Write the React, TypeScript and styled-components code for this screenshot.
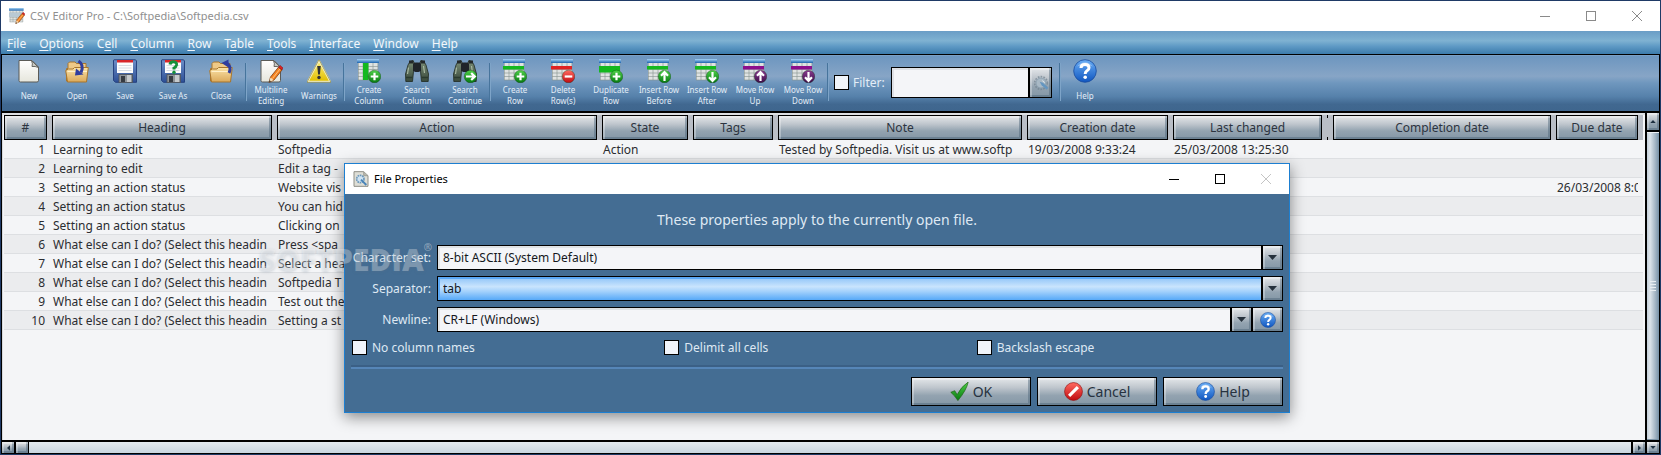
import React from "react";
import styled, { createGlobalStyle, css } from "styled-components";

const GlobalStyle = createGlobalStyle`
  * { box-sizing: border-box; }
  body { margin: 0; background: #f4f5f7; }
  body, button, input, select, table {
    font-family: "Noto Sans", "Open Sans", sans-serif;
    font-size: 12px;
    line-height: 18px;
  }
  button, input, select { margin: 0; padding: 0; border: 0; border-radius: 0; background: none; color: inherit; }
`;

const steel = css`
  background: linear-gradient(#e4e7ea 0%, #bfc6cd 35%, #93a3b0 65%, #8497a6 100%);
  box-shadow: inset 1px 1px 0 1px rgba(255, 255, 255, 0.3), inset -1px -1px 0 1px rgba(75, 100, 120, 0.45);
`;

/* ---------- window frame ---------- */
const Frame = styled.div`
  position: relative;
  min-height: 100vh;
  display: flex;
  flex-direction: column;
  border: 1px solid #1f3a66;
  background: #fff;
`;
const TitleBar = styled.header`
  display: flex;
  align-items: center;
  height: 30px;
  padding-left: 8px;
  background: #fff;
`;
const Title = styled.h1<{ $muted?: boolean }>`
  flex: 1;
  margin: 0;
  padding-left: 5px;
  font-size: 11px;
  font-weight: 400;
  color: ${(p) => (p.$muted ? "#8f8f8f" : "#000")};
`;
const Caption = styled.button<{ $color: string }>`
  display: grid;
  place-items: center;
  width: 46px;
  height: 30px;
  color: ${(p) => p.$color};
`;
const MenuBar = styled.nav`
  display: flex;
  align-items: center;
  height: 23px;
  padding-top: 2px;
  padding-left: 6px;
  gap: 13px;
  background: linear-gradient(#6a9dc6, #7fb2d2 42%, #5f9ac5 66%, #3c7bab);
`;
const MenuItem = styled.button`
  color: #f2f7fb;
  white-space: nowrap;
  u { text-underline-offset: 2px; }
`;

/* ---------- toolbar ---------- */
const ToolBar = styled.div`
  display: flex;
  align-items: stretch;
  height: 59px;
  padding-left: 3px;
  border: solid #000;
  border-width: 1px 1px 2px 1px;
  background: linear-gradient(#6b95bf, #87a5c6 38%, #6f97be 50%, #5681ab 74%, #416890 88%, #3f668e);
  box-shadow: inset 0 1px 0 #7aa0c6;
`;
const ToolButton = styled.button`
  display: flex;
  flex-direction: column;
  align-items: center;
  flex: none;
  width: 48px;
  padding-top: 4px;
  color: #e3edf7;
`;
const ToolLabel = styled.span`
  flex: 1;
  display: flex;
  align-items: center;
  justify-content: center;
  max-height: 24px;
  font-size: 8px;
  line-height: 11px;
  text-align: center;
  white-space: pre;
`;
const Divider = styled.div`
  flex: none;
  width: 2px;
  height: 38px;
  margin-top: 8px;
  border-left: 1px solid #47749c;
  border-right: 1px solid #7ea4c8;
`;
const Filter = styled.div`
  display: flex;
  align-items: center;
  width: 230px;
  height: 31px;
  margin-top: 12px;
  padding-left: 5px;
`;
const Check = styled.input.attrs({ type: "checkbox" })`
  appearance: none;
  flex: none;
  width: 15px;
  height: 15px;
  border: 1px solid #000;
  background: #f0f4fa;
  &:checked { background: #3c7bab; }
`;
const FilterLabel = styled.label`
  width: 42px;
  padding-left: 4px;
  font-size: 12px;
  color: #e3edf7;
`;
const FilterInput = styled.input`
  width: 138px;
  height: 31px;
  padding: 0 5px;
  border: 1px solid #000;
  background: #f4f5f8;
  box-shadow: inset 2px 2px 0 #dfe1e6;
`;
const FilterButton = styled.button`
  ${steel}
  display: grid;
  place-items: center;
  width: 23px;
  height: 31px;
  border: 1px solid #000;
`;

/* ---------- data grid ---------- */
const Body = styled.main`
  flex: 1;
  display: grid;
  grid-template-columns: minmax(0, 1fr) 14px;
  grid-template-rows: minmax(0, 1fr) 14px;
  border: solid #000;
  border-width: 0 1px 0 1px;
  background: #f4f5f7;
`;
const GridPane = styled.section`
  padding: 2px 2px 0 1px;
  border-left: 1px solid #d8dbe0;
  overflow: hidden;
  background: linear-gradient(#dcdfe3 0 2px, #f4f5f7 2px);
`;
const Table = styled.table`
  width: 100%;
  table-layout: fixed;
  border-collapse: collapse;
  color: #2b2d31;
  th, td { padding: 0; font-weight: 400; }
`;
const Heads = styled.tr`
  background: #b9bec6;
`;
const HeadCell = styled.div`
  ${steel}
  display: flex;
  align-items: center;
  justify-content: center;
  height: 25px;
  margin-right: 5px;
  border: 1px solid #000;
  color: #2c3440;
`;
const TickCell = styled.div`
  width: 1px;
  height: 25px;
  background: linear-gradient(#000 3px, transparent 3px 22px, #000 22px);
`;
const Row = styled.tr`
  height: 19px;
  background: #f4f5f7;
  box-shadow: inset 0 -1px 0 #dddfe2;
  &:nth-child(even) { background: #ebecee; }
`;
const CellText = styled.div<{ $end?: boolean }>`
  height: 19px;
  line-height: 19px;
  margin-right: 5px;
  padding-left: 1px;
  padding-right: ${(p) => (p.$end ? 2 : 0)}px;
  overflow: hidden;
  white-space: nowrap;
  text-align: ${(p) => (p.$end ? "right" : "left")};
`;

/* ---------- scroll bars ---------- */
const VBar = styled.div`
  display: flex;
  flex-direction: column;
  border-left: 2px solid #000;
`;
const HBar = styled.div`
  display: flex;
  border: solid #000;
  border-width: 2px 0 1px 0;
  background: linear-gradient(#e3eaf0, #c9d5df);
`;
const Corner = styled.div`
  display: flex;
  border: solid #000;
  border-width: 2px 0 1px 2px;
`;
const ScrollButton = styled.button<{ $edge?: "bottom" | "left" | "right"; $h?: number; $w?: number }>`
  ${steel}
  display: grid;
  place-items: center;
  flex: none;
  width: ${(p) => p.$w ?? 12}px;
  height: ${(p) => p.$h ?? 11}px;
  color: #1d2f40;
  ${(p) => p.$edge && `border-${p.$edge}: 2px solid #000;`}
`;
const VThumb = styled.div`
  flex: 1;
  display: grid;
  place-items: center;
  background: linear-gradient(90deg, #c4d0da, #dde4ea 25%, #a9b9c7 65%, #7791a6);
  box-shadow: inset 0 1px 0 #eef1f4, inset 0 -1px 0 #7b93a6;
`;
const HThumb = styled.div`
  ${steel}
  width: 13px;
  height: 11px;
  border-right: 1px solid #000;
`;
const Spacer = styled.div`
  flex: 1;
`;

/* ---------- dialog ---------- */
const Dialog = styled.section`
  position: absolute;
  top: 162px;
  left: 343px;
  right: 370px;
  border: 1px solid #1d7fd1;
  background: #446d93;
  color: #dfe9f3;
  box-shadow: 0 4px 14px rgba(0, 0, 0, 0.45);
`;
const DialogBody = styled.form`
  display: flex;
  flex-direction: column;
  padding: 16px 6px 6px;
`;
const Notice = styled.p`
  margin: 0 0 15px;
  font-size: 14px;
  line-height: 20px;
  text-align: center;
`;
const Fields = styled.div`
  display: grid;
  grid-template-columns: 80px minmax(0, 1fr);
  column-gap: 6px;
  row-gap: 6px;
  align-items: center;
  margin-bottom: 8px;
`;
const FieldLabel = styled.label`
  text-align: right;
  white-space: nowrap;
`;
const Control = styled.div`
  display: flex;
`;
const Combo = styled.div`
  flex: 1;
  display: grid;
  grid-template-columns: minmax(0, 1fr) 22px;
`;
const Select = styled.select<{ $active?: boolean }>`
  appearance: none;
  grid-row: 1;
  grid-column: 1 / 3;
  height: 25px;
  padding: 0 28px 0 5px;
  border: 1px solid #000;
  color: #15181c;
  background: ${(p) => (p.$active ? "linear-gradient(#8cc2f8, #c9e4fd 42%, #a5d2fc 62%, #57a9f8)" : "#f4f5f8")};
  box-shadow: ${(p) => (p.$active ? "inset 1px 1px 0 1px #5ba8f5" : "inset 2px 2px 0 #dfe2e4")};
`;
const Arrow = styled.span`
  ${steel}
  grid-row: 1;
  grid-column: 2;
  display: grid;
  place-items: center;
  border: solid #000;
  border-width: 1px 1px 1px 2px;
  pointer-events: none;
  color: #26313c;
`;
const HintButton = styled.button`
  ${steel}
  display: grid;
  place-items: center;
  width: 31px;
  height: 25px;
  border: 1px solid #000;
`;
const Options = styled.div`
  display: grid;
  grid-template-columns: repeat(3, minmax(0, 1fr));
  column-gap: 6px;
  padding-left: 1px;
`;
const Option = styled.label`
  display: flex;
  align-items: center;
  gap: 5px;
  height: 15px;
`;
const Rule = styled.hr`
  width: 100%;
  height: 4px;
  margin: 10px 0 8px;
  border: 0;
  background: linear-gradient(#3b6086 50%, #5686b8 50%);
`;
const Actions = styled.div`
  display: flex;
  justify-content: flex-end;
  gap: 6px;
`;
const ActionButton = styled.button`
  ${steel}
  display: flex;
  align-items: center;
  justify-content: center;
  gap: 4px;
  width: 120px;
  height: 29px;
  border: 1px solid #000;
  font-size: 14px;
  color: #26323f;
`;

const Watermark = styled.div`
  position: absolute;
  top: 238px;
  left: 258px;
  display: flex;
  font-family: "Open Sans", sans-serif;
  font-size: 30px;
  line-height: 42px;
  font-weight: 800;
  color: rgba(255, 255, 255, 0.28);
  text-shadow: 0 1px 3px rgba(90, 110, 130, 0.25);
  pointer-events: none;
  sup { font-size: 10px; line-height: 16px; font-weight: 600; vertical-align: top; color: rgba(255, 255, 255, 0.4); }
`;

/* ---------- drawings ---------- */
const Hidden = styled.svg`
  position: absolute;
  width: 0;
  height: 0;
`;
const grad = (id: string, a: string, b: string) => (
  <linearGradient id={id} x1="0" y1="0" x2="0" y2="1">
    <stop offset="0" stopColor={a} />
    <stop offset="1" stopColor={b} />
  </linearGradient>
);
const Gradients = () => (
  <Hidden aria-hidden="true">
    <defs>
      {grad("paper", "#ffffff", "#e6e6dc")}
      {grad("folder", "#fbe3a8", "#dba95a")}
      {grad("disk", "#6d8fc8", "#2d4f96")}
      {grad("yellow", "#fff27a", "#e0bd00")}
      {grad("head", "#a6d4f5", "#1d63ae")}
      {grad("green", "#4fd04a", "#067a10")}
      {grad("red", "#ff6a60", "#c00a10")}
      {grad("purple", "#8a3c90", "#3d0c48")}
      {grad("blue", "#6aaef5", "#0f55c0")}
      {grad("bino", "#7c8f78", "#38483a")}
    </defs>
  </Hidden>
);

const Icon = ({ size = 24, children }: { size?: number; children: React.ReactNode }) => (
  <svg width={size} height={size} viewBox="0 0 24 24" fill="none" aria-hidden="true">
    {children}
  </svg>
);
const Page = () => (
  <>
    <path d="M2 1.500H15L21.500 8V21.500Q21.500 23 20 23H3.500Q2 23 2 21.500Z" fill="url(#paper)" stroke="#5b5b57" />
    <path d="M14.500 1.500Q16 5 15 7.500Q18 7 21.500 8.500Z" fill="#c9c9c2" stroke="#5b5b57" strokeWidth=".9" />
  </>
);
const Pencil = () => (
  <>
    <path d="M10 23.500L11.500 18L19.500 8.200L23 11L15 21Z" fill="#f58220" stroke="#7a3a10" strokeWidth=".8" />
    <path d="M13.500 19.500L21 10" stroke="#ffc27a" />
    <path d="M19.500 8.200L21.200 6.500L24 9L23 11Z" fill="#e02020" stroke="#801010" strokeWidth=".5" />
    <path d="M10 23.500L11.500 18.500L14.500 21Z" fill="#f6dcb4" />
    <path d="M10 23.500L10.600 21.300L12 22.500Z" fill="#222" />
  </>
);
const Folder = () => (
  <>
    <path d="M1.500 22V9.500H3V4.500L4.500 3H10L11.500 4.500H21V22Z" fill="#efc987" stroke="#a8752c" />
    <path d="M.7 11.500L3.500 10H8L9.500 8.500H23.300L21.500 23H2.500Z" fill="url(#folder)" stroke="#a8752c" />
    <path d="M2.500 12.500H22" stroke="#fff1cb" />
  </>
);
const Disk = () => (
  <>
    <path d="M1 .8H22.500L23.500 2V23.300H2.500L.5 21.500V1.200Z" fill="url(#disk)" stroke="#26427f" />
    <rect x="4" y="1" width="16" height="13" fill="#fdfdfd" />
    <rect x="4" y="1" width="16" height="2.500" fill="#d8262a" />
    <path d="M5.500 6.500H18.500M5.500 9H18.500M5.500 11.500H18.500" stroke="#cdd3dc" strokeWidth=".8" />
    <rect x="6" y="15.500" width="13.500" height="8" fill="#8f9499" stroke="#4e5358" strokeWidth=".8" />
    <rect x="8" y="17" width="4" height="6" fill="#363b42" />
    <rect x="14" y="16" width="4" height="7" fill="#c6cacd" />
  </>
);
const Sheet = ({ tone, band }: { tone: string; band: "col" | "row" | "rows" }) => (
  <>
    <rect x="1" y="3" width="20" height="18" fill="#dfe3e2" />
    <path d="M1.500 4V21M6 4V21M11 4V21M16 4V21M20.800 4V21M1 7.500H21M1 10.500H21M1 14H21M1 17.500H21M1 21H21" stroke="#85908f" strokeWidth=".8" opacity=".75" />
    {band === "col" && <rect x="6" y="4" width="5.500" height="17" fill={tone} />}
    {band !== "col" && <rect x="0" y="7" width="21" height={band === "rows" ? 6.5 : 3.5} fill={tone} />}
    <rect x="0" y="0" width="22" height="4" fill="url(#head)" />
  </>
);
const badgePaths = {
  plus: "M17.500 13.700V21.300M13.700 17.500H21.300",
  minus: "M13.700 17.500H21.300",
  up: "M17.500 22V14M14 16.800L17.500 13.200L21 16.800",
  down: "M17.500 13V21M14 18.200L17.500 21.800L21 18.200",
  right: "M13 17.500H21M18.200 14L21.800 17.500L18.200 21",
};
const Badge = ({ fill, mark }: { fill: string; mark: keyof typeof badgePaths }) => (
  <>
    <circle cx="17.500" cy="17.500" r="6.300" fill={`url(#${fill})`} stroke="rgba(0,40,0,.45)" strokeWidth=".7" />
    <path d={badgePaths[mark]} stroke="#fff" strokeWidth="2.200" />
  </>
);
const Binoculars = () => (
  <>
    <path d="M5 2.500L8 1.500L10 5V11L8.500 12.500L7.500 22.500H.8L.5 15L3 6Z" fill="url(#bino)" stroke="#1f2a21" strokeWidth=".8" />
    <path d="M19 2.500L16 1.500L14 5V11L15.500 12.500L16.500 22.500H23.200L23.500 15L21 6Z" fill="url(#bino)" stroke="#1f2a21" strokeWidth=".8" />
    <path d="M8 4.500L10.500 3.500H13.500L16 4.500V12L13.500 13H10.500L8 12Z" fill="#20242a" />
    <path d="M4 1.500H8.500V4.500H4ZM15.500 1.500H20V4.500H15.500Z" fill="#23282a" />
    <path d="M1 18.500H7.500M16.500 18.500H23" stroke="#2a3a2e" strokeWidth="1.400" />
    <path d="M3.500 8.500L2.500 15M18.500 7L19.500 14" stroke="#a9b9a2" strokeWidth="1.200" />
  </>
);
const Question = () => (
  <>
    <circle cx="12" cy="12" r="11.300" fill="url(#blue)" stroke="#1a4d9e" strokeWidth=".8" />
    <path d="M4 7.500Q12 -1 20 7.500Q12 4 4 7.500Z" fill="#fff" opacity=".35" />
    <path d="M8 9Q8 5.500 12 5.500Q16 5.500 16 8.700Q16 10.500 14 11.800Q12.200 13 12.200 15" stroke="#fff" strokeWidth="3" />
    <circle cx="12.200" cy="18.300" r="1.800" fill="#fff" />
  </>
);
const Gear = () => (
  <>
    <circle cx="12" cy="12" r="9.500" stroke="#71818e" strokeWidth="2.500" strokeDasharray="2.500 1.800" opacity=".7" />
    <circle cx="12" cy="12" r="7.500" fill="#a9b9c5" stroke="#7f95a6" />
    <path d="M10 10L15 11.500L23 19L20.500 22L13 15.500Z" fill="#6596c0" />
    <path d="M14 8.500L17.500 11.500" stroke="#e0e9f0" strokeWidth="1.500" />
  </>
);
const AppIcon = () => (
  <Icon size={16}>
    <Sheet tone="#b9c9d4" band="rows" />
    <Pencil />
  </Icon>
);
const PropertiesIcon = () => (
  <Icon size={16}>
    <path d="M1.500 1H16L22.500 7V23H1.500Z" fill="#deded6" stroke="#8f8f86" strokeWidth="1.500" />
    <path d="M16 1V7H22.500" fill="#b8b8ae" stroke="#8f8f86" />
    <circle cx="11" cy="12" r="5.500" fill="#cfe3f2" stroke="#6b97ba" strokeWidth="2.500" strokeDasharray="2.500 1" />
    <path d="M12 13L20 21" stroke="#4a84b8" strokeWidth="3" />
  </Icon>
);
const Triangle = ({ dir, w = 9 }: { dir: "up" | "down" | "left" | "right"; w?: number }) => {
  const d = { up: "M0 5L4.500 0L9 5Z", down: "M0 0H9L4.500 5Z", left: "M5 0V9L0 4.500Z", right: "M0 0V9L5 4.500Z" }[dir];
  const side = dir === "left" || dir === "right";
  const h = Math.round((w * 5) / 9);
  return (
    <svg width={side ? h : w} height={side ? w : h} viewBox={side ? "0 0 5 9" : "0 0 9 5"} aria-hidden="true">
      <path d={d} fill="currentColor" />
    </svg>
  );
};
const WindowButtons = ({ color, closeColor = color }: { color: string; closeColor?: string }) => (
  <>
    <Caption type="button" aria-label="Minimize" $color={color}>
      <svg width="10" height="10"><path d="M0 5.500H10" stroke="currentColor" /></svg>
    </Caption>
    <Caption type="button" aria-label="Maximize" $color={color}>
      <svg width="10" height="10"><rect x=".5" y=".5" width="9" height="9" fill="none" stroke="currentColor" /></svg>
    </Caption>
    <Caption type="button" aria-label="Close" $color={closeColor}>
      <svg width="10" height="10"><path d="M0 0L10 10M10 0L0 10" stroke="currentColor" /></svg>
    </Caption>
  </>
);

/* ---------- data ---------- */
const menus: [string, string, string][] = [
  ["", "F", "ile"], ["", "O", "ptions"], ["C", "e", "ll"], ["", "C", "olumn"], ["", "R", "ow"],
  ["T", "a", "ble"], ["", "T", "ools"], ["", "I", "nterface"], ["", "W", "indow"], ["", "H", "elp"],
];

const toolGroups: { label: string; art: React.ReactNode }[][] = [
  [
    { label: "New", art: <Page /> },
    { label: "Open", art: <><Folder /><path d="M13.500 2Q19.500 6 16 13.500" stroke="#2f3d9e" strokeWidth="3" /><path d="M10 16.500L11 9.500L18.500 15.500Z" fill="#2f3d9e" /></> },
    { label: "Save", art: <Disk /> },
    { label: "Save As", art: <><Disk /><path d="M9 5.500Q9.500 2.500 12.500 2.700Q16 3 15.500 6Q15 8 13 9V10.500" stroke="#15913a" strokeWidth="3" /><circle cx="13" cy="13.300" r="1.700" fill="#15913a" /></> },
    { label: "Close", art: <><Folder /><path d="M20 14Q23 8 17.500 4" stroke="#2f3d9e" strokeWidth="3" /><path d="M12.500 4L19.500 .5V8.500Z" fill="#2f3d9e" /></> },
  ],
  [
    { label: "Multiline\nEditing", art: <><Page /><Pencil /></> },
    { label: "Warnings", art: <><path d="M12 1.500L23.200 22.500H.8Z" fill="url(#yellow)" stroke="#f4f0c8" strokeWidth="1.600" strokeLinejoin="round" /><path d="M12 .6L24 23.300H0Z" stroke="#8c8646" strokeWidth=".7" strokeLinejoin="round" /><path d="M10.200 7H13.800L12.900 15.500H11.100Z" fill="#333" /><circle cx="12" cy="18.500" r="1.700" fill="#333" /></> },
  ],
  [
    { label: "Create\nColumn", art: <><Sheet tone="#14b81e" band="col" /><Badge fill="green" mark="plus" /></> },
    { label: "Search\nColumn", art: <Binoculars /> },
    { label: "Search\nContinue", art: <><Binoculars /><Badge fill="green" mark="right" /></> },
  ],
  [
    { label: "Create\nRow", art: <><Sheet tone="#14b81e" band="row" /><Badge fill="green" mark="plus" /></> },
    { label: "Delete\nRow(s)", art: <><Sheet tone="#e02222" band="row" /><Badge fill="red" mark="minus" /></> },
    { label: "Duplicate\nRow", art: <><Sheet tone="#14b81e" band="rows" /><Badge fill="green" mark="plus" /></> },
    { label: "Insert Row\nBefore", art: <><Sheet tone="#14b81e" band="row" /><Badge fill="green" mark="up" /></> },
    { label: "Insert Row\nAfter", art: <><Sheet tone="#14b81e" band="row" /><Badge fill="green" mark="down" /></> },
    { label: "Move Row\nUp", art: <><Sheet tone="#8c0e8c" band="row" /><Badge fill="purple" mark="up" /></> },
    { label: "Move Row\nDown", art: <><Sheet tone="#8c0e8c" band="row" /><Badge fill="purple" mark="down" /></> },
  ],
];

const columns: { name: string; width?: number }[] = [
  { name: "#", width: 48 }, { name: "Heading", width: 225 }, { name: "Action" }, { name: "State", width: 91 },
  { name: "Tags", width: 85 }, { name: "Note", width: 249 }, { name: "Creation date", width: 146 },
  { name: "Last changed", width: 154 }, { name: "", width: 6 }, { name: "Completion date", width: 223 },
  { name: "Due date", width: 87 },
];

const question = "What else can I do? (Select this headin";
type Entry = { heading: string; action: string; state?: string; note?: string; created?: string; changed?: string; due?: string };
const entries: Entry[] = [
  { heading: "Learning to edit", action: "Softpedia", state: "Action", note: "Tested by Softpedia. Visit us at www.softp", created: "19/03/2008 9:33:24", changed: "25/03/2008 13:25:30" },
  { heading: "Learning to edit", action: "Edit a tag -" },
  { heading: "Setting an action status", action: "Website vis", changed: "25/03/2008 13:25:38", due: "26/03/2008 8:0" },
  { heading: "Setting an action status", action: "You can hid" },
  { heading: "Setting an action status", action: "Clicking on" },
  { heading: question, action: "Press <spa" },
  { heading: question, action: "Select a hea", changed: "25/03/2008 13:25:38" },
  { heading: question, action: "Softpedia T", changed: "25/03/2008 13:25:38" },
  { heading: question, action: "Test out the" },
  { heading: question, action: "Setting a st" },
];

const Tool = ({ label, art }: { label: string; art: React.ReactNode }) => (
  <ToolButton type="button">
    <Icon>{art}</Icon>
    <ToolLabel>{label}</ToolLabel>
  </ToolButton>
);

const ComboField = ({ id, label, value, active, hint }: { id: string; label: string; value: string; active?: boolean; hint?: boolean }) => (
  <>
    <FieldLabel htmlFor={id}>{label}</FieldLabel>
    <Control>
      <Combo>
        <Select id={id} $active={active}><option>{value}</option></Select>
        <Arrow><Triangle dir="down" /></Arrow>
      </Combo>
      {hint && <HintButton type="button" aria-label="Newline help"><Icon size={16}><Question /></Icon></HintButton>}
    </Control>
  </>
);

export default function App() {
  return (
    <Frame>
      <GlobalStyle />
      <Gradients />
      <TitleBar>
        <AppIcon />
        <Title $muted>CSV Editor Pro - C:\Softpedia\Softpedia.csv</Title>
        <WindowButtons color="#8a8a8a" />
      </TitleBar>
      <MenuBar>
        {menus.map(([a, key, b]) => (
          <MenuItem key={a + key + b} type="button">{a}<u>{key}</u>{b}</MenuItem>
        ))}
      </MenuBar>
      <ToolBar role="toolbar">
        {toolGroups.map((group, i) => (
          <React.Fragment key={i}>
            {group.map((t) => <Tool key={t.label} {...t} />)}
            <Divider />
          </React.Fragment>
        ))}
        <Filter>
          <Check id="filter-on" />
          <FilterLabel htmlFor="filter-on">Filter:</FilterLabel>
          <FilterInput type="text" aria-label="Filter text" />
          <FilterButton type="button" aria-label="Apply filter"><Icon size={16}><Gear /></Icon></FilterButton>
        </Filter>
        <Divider />
        <Tool label="Help" art={<Question />} />
      </ToolBar>

      <Body>
        <GridPane>
          <Table>
            <colgroup>
              {columns.map((c, i) => <col key={i} width={c.width} />)}
            </colgroup>
            <thead>
              <Heads>
                {columns.map((c, i) => (
                  c.name ? <th key={i} scope="col"><HeadCell>{c.name}</HeadCell></th> : <td key={i}><TickCell /></td>
                ))}
              </Heads>
            </thead>
            <tbody>
              {entries.map((e, i) => (
                <Row key={i}>
                  <td><CellText $end>{i + 1}</CellText></td>
                  {[e.heading, e.action, e.state, "", e.note, e.created, e.changed, "", "", e.due].map((text, n) => (
                    <td key={n}><CellText>{text}</CellText></td>
                  ))}
                </Row>
              ))}
            </tbody>
          </Table>
        </GridPane>
        <VBar>
          <ScrollButton type="button" aria-label="Scroll up" $edge="bottom" $h={19}><Triangle dir="up" w={6} /></ScrollButton>
          <VThumb>
            <svg width="6" height="10" aria-hidden="true"><path d="M0 .5H6M0 3.500H6M0 6.500H6M0 9.500H6" stroke="#e9eef2" /></svg>
          </VThumb>
        </VBar>
        <HBar>
          <ScrollButton type="button" aria-label="Scroll left" $edge="right" $w={14}><Triangle dir="left" w={6} /></ScrollButton>
          <HThumb />
          <Spacer />
          <ScrollButton type="button" aria-label="Scroll right" $edge="left" $w={14}><Triangle dir="right" w={6} /></ScrollButton>
        </HBar>
        <Corner>
          <ScrollButton type="button" aria-label="Scroll down"><Triangle dir="down" w={6} /></ScrollButton>
        </Corner>
      </Body>

      <Dialog role="dialog" aria-label="File Properties">
        <TitleBar>
          <PropertiesIcon />
          <Title as="h2">File Properties</Title>
          <WindowButtons color="#000" closeColor="#c4c4c4" />
        </TitleBar>
        <DialogBody>
          <Notice>These properties apply to the currently open file.</Notice>
          <Fields>
            <ComboField id="charset" label="Character set:" value="8-bit ASCII (System Default)" />
            <ComboField id="separator" label="Separator:" value="tab" active />
            <ComboField id="newline" label="Newline:" value="CR+LF (Windows)" hint />
          </Fields>
          <Options>
            <Option><Check />No column names</Option>
            <Option><Check />Delimit all cells</Option>
            <Option><Check />Backslash escape</Option>
          </Options>
          <Rule />
          <Actions>
            <ActionButton type="button">
              <Icon size={19}><path d="M1 13L6 11L9 16Q14 6 23 0Q21 10 10 23.500Q6 17 1 13Z" fill="url(#green)" stroke="#1e5c10" strokeWidth=".8" /></Icon>
              OK
            </ActionButton>
            <ActionButton type="button">
              <Icon size={19}><circle cx="12" cy="12" r="11.300" fill="url(#red)" stroke="#8f1010" strokeWidth=".8" /><path d="M6.500 17.500L17.500 6.500" stroke="#fff" strokeWidth="4" /></Icon>
              Cancel
            </ActionButton>
            <ActionButton type="button">
              <Icon size={19}><Question /></Icon>
              Help
            </ActionButton>
          </Actions>
        </DialogBody>
      </Dialog>
      <Watermark>SOFTPEDIA<sup>®</sup></Watermark>
    </Frame>
  );
}
